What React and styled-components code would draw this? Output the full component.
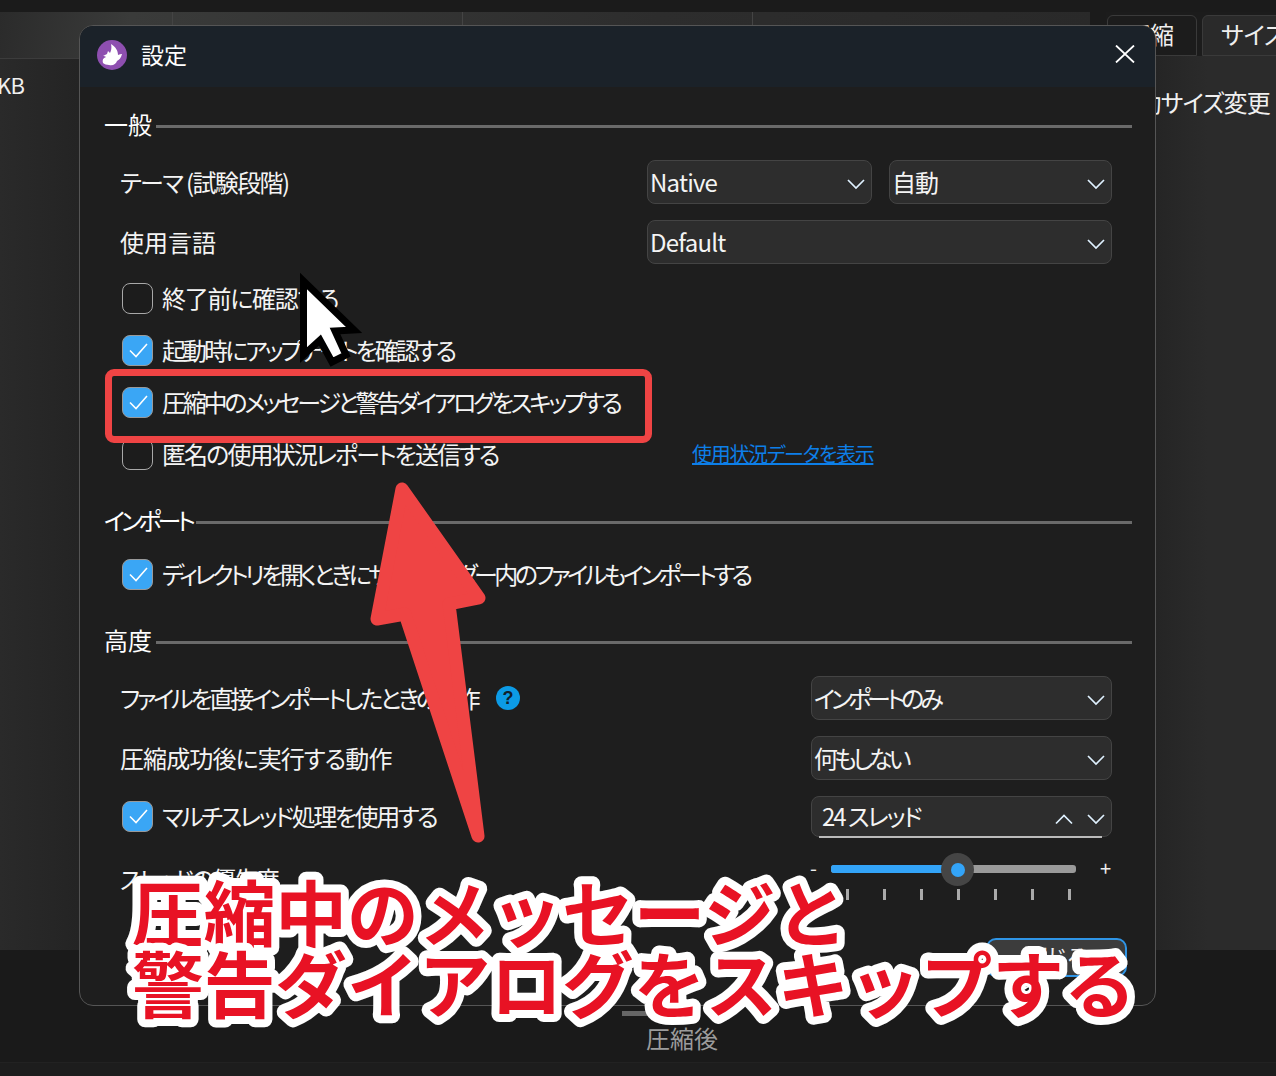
import React from "react";
import styled, { createGlobalStyle } from "styled-components";

const FONT = `"Noto Sans CJK JP", "Noto Sans", sans-serif`;

const Global = createGlobalStyle`
  html, body { margin: 0; padding: 0; background: #1a1a1a; }
  * { box-sizing: border-box; }
  #root { width: 1276px; height: 1076px; }
`;

const Page = styled.div`
  position: relative;
  width: 1276px;
  height: 1076px;
  overflow: hidden;
  background: #1b1b1b;
  font-family: ${FONT};
  font-feature-settings: "palt";
  color: #fff;
  display: flex;
  flex-direction: column;
  padding-top: 12px;
`;

const AppMain = styled.div`
  display: flex;
  height: 938px;
  gap: 16px;
`;

const LeftPane = styled.div`
  width: 1090px;
  display: flex;
  flex-direction: column;
  background: linear-gradient(90deg, #2a2a2a, #202020 12%);
`;

const TableHead = styled.div`
  height: 47px;
  display: flex;
  background: linear-gradient(100deg, #2b2b2b, #3a3b3a 12%, #2d2d2d 60%, #292929);
  border-bottom: 1px solid #3c3c3c;
`;

const HeadCell = styled.div`
  width: ${(p) => p.$w}px;
  border-right: 1px solid #444;
  flex: none;
`;

const SizeCell = styled.div`
  font-size: 22px;
  line-height: 30px;
  margin: 10px 0 0 -3px;
  color: #f0f0f0;
  letter-spacing: -0.8px;
`;

const RightPane = styled.div`
  flex: 1;
  min-width: 0;
  display: flex;
  flex-direction: column;
  background: linear-gradient(90deg, #1f1f1f, #2b2b2b 60%);
  padding-top: 3px;
  margin-bottom: -56px;
  border-bottom: 2px solid #383838;
`;

const Tabs = styled.div`
  display: flex;
  gap: 5px;
  height: 41px;
  padding-left: 1px;
  background: #1c1c1c;
  box-shadow: 0 -3px 0 #1c1c1c;
`;

const Tab = styled.div`
  width: ${(p) => p.$w}px;
  height: 41px;
  border: 1px solid #3a3a3a;
  border-radius: 6px 6px 0 0;
  background: ${(p) => (p.$on ? "#2a2a2a" : "#1c1c1c")};
  font-size: 24px;
  line-height: 36px;
  white-space: nowrap;
  overflow: hidden;
  color: #eee;
  padding-left: ${(p) => p.$pad}px;
  flex: none;
`;

const RightLabel = styled.div`
  font-size: 24px;
  line-height: 34px;
  margin: 29px 0 0 -14px;
  letter-spacing: -0.8px;
  white-space: nowrap;
  color: #f0f0f0;
  text-align: right;
  width: 178px;
`;

const Bottom = styled.div`
  flex: 1;
  display: flex;
  flex-direction: column;
  align-items: center;
  background: #1a1a1a;
  padding: 61px 0 0 0;
`;

const BottomBar = styled.div`
  width: 60px;
  height: 5px;
  margin-left: 28px;
  background: #666;
`;

const BottomLabel = styled.div`
  font-size: 24px;
  line-height: 30px;
  margin: 7px 0 0 88px;
  color: #9c9c9c;
`;

const FooterLine = styled.div`
  align-self: stretch;
  flex: 1;
  margin-top: 9px;
  border-top: 1px solid #222;
  background: #1d1d1d;
`;

const Dialog = styled.div`
  position: absolute;
  left: 79px;
  top: 25px;
  width: 1077px;
  height: 981px;
  background: #1e1e1e;
  border: 1.5px solid #555;
  border-radius: 14px;
  overflow: hidden;
  display: flex;
  flex-direction: column;
`;

const TitleBar = styled.div`
  height: 61px;
  background: #1b2229;
  display: flex;
  align-items: center;
  padding: 0 20px 0 16px;
  flex: none;
`;

const TitleIcon = styled.svg`
  width: 30px;
  height: 30px;
  margin: -4px 1px 0 1px;
  flex: none;
`;

const TitleText = styled.div`
  font-size: 23px;
  line-height: 32px;
  padding-bottom: 6px;
  margin-left: 13px;
  flex: 1;
  color: #fff;
`;

const CloseIcon = styled.svg`
  width: 20px;
  height: 18px;
  margin-bottom: 5px;
  flex: none;
`;

const Body = styled.div`
  flex: 1;
  position: relative;
  padding: 0 23px 0 24px;
`;

const Section = styled.div`
  display: flex;
  align-items: center;
  gap: 4px;
  height: 38px;
  margin-top: ${(p) => p.$top}px;
`;

const SectionTitle = styled.div`
  font-size: 24px;
  line-height: 32px;
  padding-bottom: 4px;
  letter-spacing: ${(p) => p.$ls || 0}px;
  white-space: nowrap;
  color: #fff;
`;

const SectionLine = styled.div`
  flex: 1;
  height: 3px;
  background: #6a6a6a;
`;

const Row = styled.div`
  display: flex;
  align-items: center;
  height: 44px;
  margin-top: ${(p) => p.$top || 0}px;
  padding: 0 20px 0 16px;
`;

const HelpRow = styled(Row)`
  position: relative;
`;

const RowLabel = styled.div`
  flex: 1;
  font-size: 24px;
  line-height: 32px;
  letter-spacing: ${(p) => p.$ls || 0}px;
  white-space: nowrap;
  color: #f4f4f4;
`;

const Selects = styled.div`
  display: flex;
  gap: 17px;
  width: ${(p) => p.$w}px;
`;

const Select = styled.div`
  flex: ${(p) => p.$grow};
  height: 44px;
  background: #2d2d2d;
  border: 1.5px solid #444;
  border-radius: 8px;
  display: flex;
  align-items: center;
  justify-content: space-between;
  padding: 0 5px 0 2px;
  font-size: 24px;
  color: #f4f4f4;
  white-space: nowrap;
  position: relative;
`;

const SpinSelect = styled(Select)`
  height: 41px;
  margin-bottom: 3px;
`;

const SelectText = styled.span`
  padding-bottom: 2px;
  letter-spacing: ${(p) => p.$ls ?? -0.8}px;
`;

const SpinText = styled(SelectText)`
  padding-left: 8px;
`;

const SpinIcons = styled.span`
  display: flex;
  gap: 12px;
  align-items: center;
`;

const SpinLine = styled.span`
  position: absolute;
  left: 7px;
  right: 9px;
  bottom: -2px;
  height: 2px;
  background: #bbb;
`;

const ChevronIcon = styled.svg`
  width: 20px;
  height: 12px;
  margin-top: 4px;
  flex: none;
`;

const CheckRow = styled.div`
  display: flex;
  align-items: center;
  gap: 9px;
  height: 32px;
  margin-top: ${(p) => p.$top}px;
  padding-left: 18px;
  position: relative;
`;

const RowCheck = styled(CheckRow)`
  flex: 1;
  padding-left: 2px;
`;

const Box = styled.div`
  width: 31px;
  height: 31px;
  flex: none;
  border-radius: 8px;
  border: 1.5px solid ${(p) => (p.$on ? "#999" : "#a8a8a8")};
  background: ${(p) => (p.$on ? "#3aa6f5" : "#1c1c1c")};
  display: flex;
  align-items: center;
  justify-content: center;
`;

const CheckLabel = styled.div`
  font-size: 24px;
  line-height: 32px;
  letter-spacing: ${(p) => p.$ls || 0}px;
  white-space: nowrap;
  color: #f4f4f4;
`;

const LinkText = styled.a`
  position: absolute;
  left: 588px;
  top: 2px;
  font-size: 20px;
  line-height: 28px;
  letter-spacing: -1.3px;
  color: #0d7fe8;
  text-decoration: underline;
  white-space: nowrap;
`;

const Help = styled.span`
  display: inline-flex;
  width: 24px;
  height: 24px;
  border-radius: 50%;
  background: #0c9be6;
  color: #10202c;
  font-family: "Liberation Sans", sans-serif;
  font-weight: 700;
  font-size: 18px;
  align-items: center;
  justify-content: center;
  position: absolute;
  left: 392px;
  top: 10px;
`;

const SliderRow = styled.div`
  position: relative;
  display: flex;
  margin-top: 12px;
  padding-left: 16px;
  height: 60px;
`;

const SliderArea = styled.div`
  position: absolute;
  left: 706px;
  top: 0;
  width: 300px;
  height: 60px;
`;

const SliderLabel = styled.div`
  font-size: 24px;
  line-height: 32px;
  letter-spacing: -2.3px;
  margin-top: 11px;
  color: #f4f4f4;
  white-space: nowrap;
`;

const Minus = styled.span`
  position: absolute;
  left: 0;
  top: 1px;
  font-size: 20px;
  color: #eee;
`;

const Plus = styled(Minus)`
  left: 290px;
`;

const Track = styled.div`
  position: absolute;
  left: 21px;
  top: 13px;
  width: 245px;
  height: 8px;
  border-radius: 3px;
  background: #9a9a9a;
`;

const Fill = styled.div`
  height: 100%;
  border-radius: 3px;
  background: #33a4f8;
`;

const Thumb = styled.div`
  position: absolute;
  left: 110px;
  top: -12px;
  width: 33px;
  height: 33px;
  border-radius: 50%;
  background: #454545;
  display: flex;
  align-items: center;
  justify-content: center;
  &::after {
    content: "";
    width: 14px;
    height: 14px;
    border-radius: 50%;
    background: #33a4f8;
  }
`;

const Ticks = styled.div`
  position: absolute;
  left: 36px;
  top: 37px;
  width: 225px;
  display: flex;
  justify-content: space-between;
`;

const Tick = styled.span`
  width: 3px;
  height: 11px;
  background: #aaa;
`;

const CloseBtn = styled.div`
  position: absolute;
  left: 906px;
  top: 851px;
  width: 141px;
  height: 39px;
  border: 2px solid #2f95e6;
  border-radius: 10px;
  background: #3c3c3c;
  text-align: center;
  font-size: 22px;
  line-height: 31px;
  color: #f0f0f0;
`;

const Overlay = styled.svg`
  position: absolute;
  left: 0;
  top: 0;
  width: 1276px;
  height: 1076px;
  pointer-events: none;
`;

const RedBox = styled.div`
  position: absolute;
  left: 105px;
  top: 369px;
  width: 547px;
  height: 74px;
  border: 7px solid #ef4444;
  border-radius: 9px;
`;

const Caption = styled.text`
  font-family: "Noto Sans CJK JP", sans-serif;
  font-feature-settings: normal;
  font-weight: 700;
  font-size: 71.7px;
  fill: #e81224;
  stroke: #fff;
  stroke-width: 16px;
  stroke-linejoin: round;
  paint-order: stroke fill;
`;

const Flame = () => (
  <TitleIcon viewBox="0 0 30 30">
    <circle cx="15" cy="15" r="15" fill="#8e4fb0" />
    <path d="M6 23c-1-3 0-5 3-6-1-1-2-1-3-1l4-2 1-3 2 2c1-2 2-5 1-9 5 3 7 7 7 11 2-1 3-1 4-1-1 4-3 6-5 7-1 3-4 5-8 4-2 0-5-1-6-2z" fill="#fff" />
  </TitleIcon>
);

const Chevron = ({ up }) => (
  <ChevronIcon viewBox="0 0 20 12" fill="none" stroke="#dff1ff" strokeWidth="1.7">
    <path d={up ? "M2 10.5 10 2.5l8 8" : "M2 2l8 8 8-8"} />
  </ChevronIcon>
);

const Check = () => (
  <svg width="22" height="18" viewBox="0 0 22 18" fill="none" stroke="#fff" strokeWidth="1.6">
    <path d="M3 9.5l6 6L20 3" />
  </svg>
);

const CloseX = () => (
  <CloseIcon viewBox="0 0 20 18" stroke="#fff" strokeWidth="1.8">
    <path d="M1 0.5l18 17M19 0.5l-18 17" />
  </CloseIcon>
);

const CheckItem = ({ on, top, ls, children }) => (
  <CheckRow $top={top}>
    <Box $on={on}>{on && <Check />}</Box>
    <CheckLabel $ls={ls}>{children}</CheckLabel>
  </CheckRow>
);

export default function App() {
  return (
    <Page>
      <Global />
      <AppMain>
        <LeftPane>
          <TableHead>
            <HeadCell $w={173} />
            <HeadCell $w={290} />
            <HeadCell $w={290} />
          </TableHead>
          <SizeCell>KB</SizeCell>
        </LeftPane>
        <RightPane>
          <Tabs>
            <Tab $w={90} $pad={18}>圧縮</Tab>
            <Tab $w={100} $pad={18} $on>サイズ</Tab>
          </Tabs>
          <RightLabel>自動サイズ変更</RightLabel>
        </RightPane>
      </AppMain>
      <Bottom>
        <BottomBar />
        <BottomLabel>圧縮後</BottomLabel>
        <FooterLine />
      </Bottom>

      <Dialog>
        <TitleBar>
          <Flame />
          <TitleText>設定</TitleText>
          <CloseX />
        </TitleBar>
        <Body>
          <Section $top={20}>
            <SectionTitle>一般</SectionTitle>
            <SectionLine />
          </Section>
          <Row $top={15}>
            <RowLabel $ls={-1.6}>テーマ (試験段階)</RowLabel>
            <Selects $w={465}>
              <Select $grow="225"><SelectText>Native</SelectText><Chevron /></Select>
              <Select $grow="223"><SelectText $ls={-1}>自動</SelectText><Chevron /></Select>
            </Selects>
          </Row>
          <Row $top={16}>
            <RowLabel>使用言語</RowLabel>
            <Selects $w={465}>
              <Select $grow="1"><SelectText>Default</SelectText><Chevron /></Select>
            </Selects>
          </Row>
          <CheckItem top={18} ls={-1.25}>終了前に確認する</CheckItem>
          <CheckItem on top={20} ls={-2.95}>起動時にアップデートを確認する</CheckItem>
          <CheckItem on top={20} ls={-3.2}>圧縮中のメッセージと警告ダイアログをスキップする</CheckItem>
          <CheckRow $top={20}>
            <Box />
            <CheckLabel $ls={-1.9}>匿名の使用状況レポートを送信する</CheckLabel>
            <LinkText>使用状況データを表示</LinkText>
          </CheckRow>
          <Section $top={33}>
            <SectionTitle $ls={-4}>インポート</SectionTitle>
            <SectionLine />
          </Section>
          <CheckItem on top={17} ls={-3.48}>ディレクトリを開くときにサブフォルダー内のファイルもインポートする</CheckItem>
          <Section $top={33}>
            <SectionTitle>高度</SectionTitle>
            <SectionLine />
          </Section>
          <HelpRow $top={15}>
            <RowLabel $ls={-3.15}>ファイルを直接インポートしたときの動作</RowLabel>
            <Help>?</Help>
            <Selects $w={301}>
              <Select $grow="1"><SelectText $ls={-4.1}>インポートのみ</SelectText><Chevron /></Select>
            </Selects>
          </HelpRow>
          <Row $top={16}>
            <RowLabel $ls={-0.9}>圧縮成功後に実行する動作</RowLabel>
            <Selects $w={301}>
              <Select $grow="1"><SelectText $ls={-3.9}>何もしない</SelectText><Chevron /></Select>
            </Selects>
          </Row>
          <Row $top={16}>
            <RowCheck $top={-4}>
              <Box $on><Check /></Box>
              <CheckLabel $ls={-2.4}>マルチスレッド処理を使用する</CheckLabel>
            </RowCheck>
            <Selects $w={301}>
              <SpinSelect $grow="1">
                <SpinText $ls={-2}>24 スレッド</SpinText>
                <SpinIcons><Chevron up /><Chevron /></SpinIcons>
                <SpinLine />
              </SpinSelect>
            </Selects>
          </Row>
          <SliderRow>
            <SliderLabel>スレッドの優先度</SliderLabel>
            <SliderArea>
              <Minus>-</Minus>
              <Plus>+</Plus>
              <Track>
                <Fill style={{ width: "48%" }} />
                <Thumb />
              </Track>
              <Ticks>
                <Tick /><Tick /><Tick /><Tick /><Tick /><Tick /><Tick />
              </Ticks>
            </SliderArea>
          </SliderRow>
          <CloseBtn>閉じる</CloseBtn>
        </Body>
      </Dialog>

      <RedBox />
      <Overlay viewBox="0 0 1276 1076">
        <path d="M303.5 281 L303.5 355 L320 340 L332 362 L346 355 L335 331 L354 330 Z" fill="#fff" stroke="#000" strokeWidth="7" strokeLinejoin="miter" />
        <path d="M402 489 L377 619 L405 614 L478 836 L449 604 L479 598 Z" fill="#ef4444" stroke="#ef4444" strokeWidth="13" strokeLinejoin="round" />
        <Caption x="132" y="941">圧縮中のメッセージと</Caption>
        <Caption x="132" y="1012">警告ダイアログをスキップする</Caption>
      </Overlay>
    </Page>
  );
}
